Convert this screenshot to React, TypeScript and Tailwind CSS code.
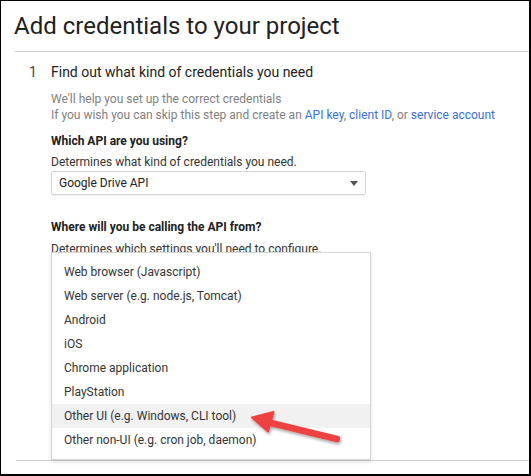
const OPTIONS = [
  "Web browser (Javascript)",
  "Web server (e.g. node.js, Tomcat)",
  "Android",
  "iOS",
  "Chrome application",
  "PlayStation",
  "Other UI (e.g. Windows, CLI tool)",
  "Other non-UI (e.g. cron job, daemon)",
];

const HIGHLIGHTED = 6;

function Arrow() {
  return (
    <svg
      className="absolute left-0 top-0 z-20 pointer-events-none"
      width="531"
      height="476"
      viewBox="0 0 531 476"
    >
      <defs>
        <filter id="sh" x="-20%" y="-50%" width="140%" height="200%">
          <feDropShadow dx="1" dy="2" stdDeviation="1.5" floodColor="#000" floodOpacity="0.35" />
        </filter>
      </defs>
      <g filter="url(#sh)" fill="#ec4242" stroke="#ec4242">
        <line x1="266" y1="421" x2="336" y2="438" strokeWidth="6.5" strokeLinecap="round" />
        <polygon points="251,416.5 272.5,411 267,430.5" strokeWidth="2" strokeLinejoin="round" />
      </g>
    </svg>
  );
}

export default function App() {
  return (
    <div
      className="relative w-[531px] h-[476px] overflow-hidden bg-white border-black border-t border-l border-r-2 border-b-2 text-[#212121]"
      style={{ fontFamily: "Roboto, 'Liberation Sans', sans-serif" }}
    >
      <div className="ml-[14px] border-b border-[#d0d0d0] pt-[9px] pb-[9px]">
        <h1 className="text-[24px] leading-[32px] font-normal -ml-[1px]">
          Add credentials to your project
        </h1>
      </div>

      <div className="flex pt-[10px]">
        <div className="w-[50px] pl-[28px] text-[14px] leading-[20px] text-[#424242]">1</div>
        <div className="flex-1">
          <h2 className="text-[14px] leading-[20px]">Find out what kind of credentials you need</h2>

          <div className="mt-[9px] text-[12px] leading-[16px] text-[#808080]">
            <p>We'll help you set up the correct credentials</p>
            <p className="whitespace-nowrap">
              If you wish you can skip this step and create an{" "}
              <span className="text-[#3b6fd8]">API key</span>,{" "}
              <span className="text-[#3b6fd8]">client ID</span>, or{" "}
              <span className="text-[#3b6fd8]">service account</span>
            </p>
          </div>

          <p className="mt-[10px] text-[12px] leading-[16px] font-bold">Which API are you using?</p>
          <p className="mt-[5px] text-[12px] leading-[16px] text-[#333]">
            Determines what kind of credentials you need.
          </p>

          <div className="mt-[1px] w-[315px] h-[24px] border border-[#d4d4d4] rounded-[2px] shadow-[0_1px_1px_rgba(0,0,0,0.06)] flex items-center justify-between pl-[7px] pr-[7px] text-[12px]">
            <span>Google Drive API</span>
            <span className="w-0 h-0 border-l-[4.5px] border-r-[4.5px] border-t-[5px] border-l-transparent border-r-transparent border-t-[#555]" />
          </div>

          <p className="mt-[24px] text-[12px] leading-[16px] font-bold">Where will you be calling the API from?</p>
          <div className="relative">
            <p className="mt-[6px] text-[12px] leading-[16px] text-[#333]">
              Determines which settings you'll need to configure.
            </p>
            <div className="absolute left-0 top-[11px] z-10 w-[320px] bg-white border border-[#d6d6d6] shadow-[0_2px_4px_rgba(0,0,0,0.12)] py-[7px]">
              {OPTIONS.map((o, i) => (
                <div
                  key={o}
                  className={`h-[24px] pl-[12px] flex items-center text-[12px] text-[#333] ${
                    i === HIGHLIGHTED ? "bg-[#f1f1f1]" : ""
                  }`}
                >
                  {o}
                </div>
              ))}
            </div>
          </div>
        </div>
      </div>

      <div className="absolute left-[15px] right-0 top-[459px] border-t border-[#d0d0d0]" />
      <Arrow />
    </div>
  );
}
